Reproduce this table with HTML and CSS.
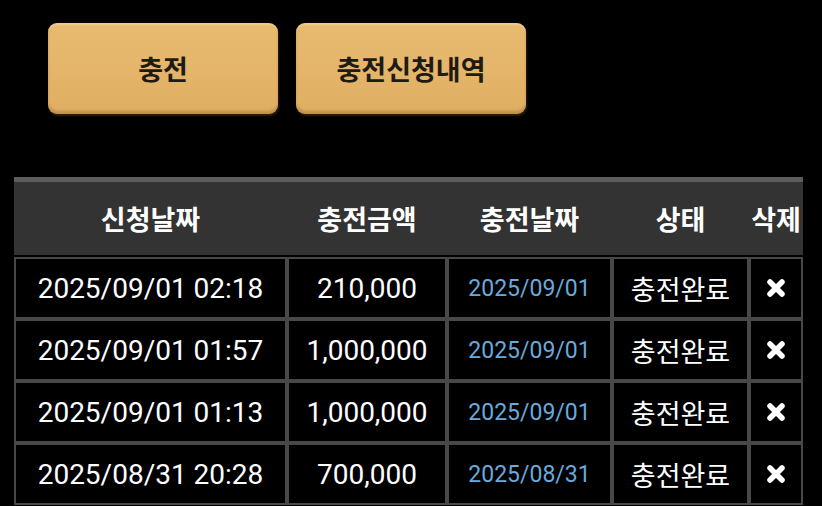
FILE: index.html
```html
<!DOCTYPE html>
<html lang="ko">
<head>
<meta charset="utf-8">
<title>충전신청내역</title>
<link rel="stylesheet" href="styles.css">
</head>
<body>
<div class="page">
  <div class="tabs">
    <button class="tab">충전</button>
    <button class="tab">충전신청내역</button>
  </div>
  <div class="list">
    <div class="thead">
      <div class="th">신청날짜</div>
      <div class="th">충전금액</div>
      <div class="th">충전날짜</div>
      <div class="th">상태</div>
      <div class="th">삭제</div>
    </div>
    <div class="row">
      <div class="td num">2025/09/01 02:18</div>
      <div class="td num">210,000</div>
      <div class="td date">2025/09/01</div>
      <div class="td ko">충전완료</div>
      <div class="td del"><svg viewBox="0 0 20 20" width="20" height="20"><path d="M4 4L16 16M16 4L4 16" stroke="#fff" stroke-width="5.5" stroke-linecap="round"/></svg></div>
    </div>
    <div class="row">
      <div class="td num">2025/09/01 01:57</div>
      <div class="td num">1,000,000</div>
      <div class="td date">2025/09/01</div>
      <div class="td ko">충전완료</div>
      <div class="td del"><svg viewBox="0 0 20 20" width="20" height="20"><path d="M4 4L16 16M16 4L4 16" stroke="#fff" stroke-width="5.5" stroke-linecap="round"/></svg></div>
    </div>
    <div class="row">
      <div class="td num">2025/09/01 01:13</div>
      <div class="td num">1,000,000</div>
      <div class="td date">2025/09/01</div>
      <div class="td ko">충전완료</div>
      <div class="td del"><svg viewBox="0 0 20 20" width="20" height="20"><path d="M4 4L16 16M16 4L4 16" stroke="#fff" stroke-width="5.5" stroke-linecap="round"/></svg></div>
    </div>
    <div class="row">
      <div class="td num">2025/08/31 20:28</div>
      <div class="td num">700,000</div>
      <div class="td date">2025/08/31</div>
      <div class="td ko">충전완료</div>
      <div class="td del"><svg viewBox="0 0 20 20" width="20" height="20"><path d="M4 4L16 16M16 4L4 16" stroke="#fff" stroke-width="5.5" stroke-linecap="round"/></svg></div>
    </div>
  </div>
</div>
</body>
</html>
```

FILE: styles.css
```css
html, body {
  margin: 0;
  padding: 0;
  background: #000;
  overflow: hidden;
}
body {
  font-family: Roboto, "Noto Sans CJK KR", sans-serif;
  color: #fff;
}
.page {
  width: 822px;
  height: 506px;
  padding: 23px 0 0 14px;
  box-sizing: border-box;
}
.tabs {
  display: flex;
  gap: 18px;
  padding-left: 34px;
}
.tab {
  width: 230px;
  height: 91px;
  border: none;
  border-radius: 9px;
  background: linear-gradient(#e8bb70, #e4b56a 50%, #dfae62);
  box-shadow: inset 0 -3px 3px rgba(130, 85, 25, 0.35), inset 0 2px 2px rgba(255, 235, 190, 0.35), 1px 2px 2px rgba(90, 60, 20, 0.5);
  font-family: "Noto Sans CJK KR", sans-serif;
  font-weight: 700;
  font-size: 27px;
  color: #1e1a14;
  padding: 0;
}
.list {
  margin-top: 63px;
  width: 789px;
}
.thead {
  display: grid;
  grid-template-columns: 273px 160px 165px 137px 54px;
  height: 73px;
  border-top: 5px solid #5d5d5d;
  background: #333;
  margin-bottom: 2px;
}
.th {
  display: flex;
  align-items: center;
  justify-content: center;
  font-family: "Noto Sans CJK KR", sans-serif;
  font-weight: 700;
  font-size: 27px;
  color: #fff;
  white-space: nowrap;
}
.row {
  display: grid;
  grid-template-columns: 273px 160px 165px 137px 54px;
  height: 62px;
}
.td {
  border: 2px solid #484848;
  display: flex;
  align-items: center;
  justify-content: center;
  background: #000;
  white-space: nowrap;
}
.num {
  font-size: 28px;
  color: #fff;
}
.date {
  font-size: 23px;
  color: #6aa9dc;
}
.ko {
  font-family: "Noto Sans CJK KR", sans-serif;
  font-size: 27px;
  color: #fff;
}
.del svg {
  display: block;
}
```
